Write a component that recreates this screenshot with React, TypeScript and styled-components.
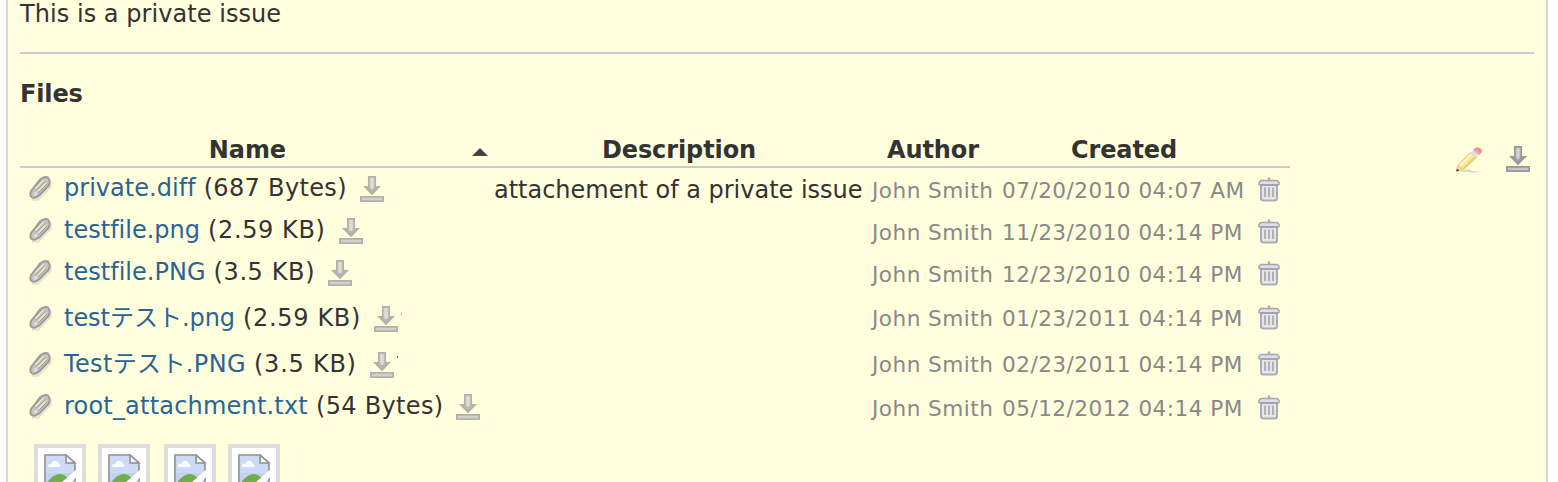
import React from "react";
import styled, { createGlobalStyle } from "styled-components";

const Global = createGlobalStyle`
  * { box-sizing: border-box; }
  html, body { margin: 0; height: 482px; overflow: hidden; background: #fff; }
  body {
    color: #333;
    font: 24px/28px "DejaVu Sans", "Noto Sans CJK JP", sans-serif;
    font-variant-ligatures: none;
  }
`;

const Issue = styled.main`
  height: 482px;
  margin: 0 10px 0 6px;
  padding: 0 12px;
  border: solid #d7d7d7;
  border-width: 0 2px;
  background: #ffffdd;
  overflow: hidden;
`;
const Description = styled.p`
  height: 52px;
  margin: 0;
  letter-spacing: 0.05px;
`;
const Rule = styled.hr`
  height: 2px;
  margin: 0;
  border: 0;
  background: #c9c8cc;
`;
const Heading = styled.h3`
  height: 81px;
  margin: 0;
  padding-top: 26px;
  font-size: 24px;
  line-height: 28px;
  letter-spacing: -0.15px;
`;
const Attachments = styled.section`
  display: flex;
  justify-content: space-between;
  align-items: flex-start;
`;
const Table = styled.div`
  width: 1270px;
`;
const columns = "474px 378px 130px 254px 1fr";
const HeaderRow = styled.div`
  display: grid;
  grid-template-columns: ${columns};
  height: 33px;
  padding-top: 1px;
  border-bottom: 2px solid #c9c8cc;
  font-weight: bold;
  line-height: 28px;
  letter-spacing: -0.1px;
`;
const HeaderCell = styled.div<{ $sorted?: boolean; $pad?: number }>`
  display: flex;
  justify-content: ${(p) => (p.$sorted ? "flex-end" : "center")};
  align-items: center;
  height: 28px;
  padding-right: ${(p) => p.$pad ?? 0}px;
  gap: 186px;
  white-space: nowrap;
`;
const Row = styled.div<{ $tall?: boolean }>`
  display: grid;
  grid-template-columns: ${columns};
  align-items: center;
  height: ${(p) => (p.$tall ? 46 : 42)}px;
  white-space: nowrap;
`;
const NameCell = styled.div<{ $tall?: boolean }>`
  display: flex;
  align-items: center;
  height: 32px;
  margin-top: ${(p) => (p.$tall ? 2 : -2)}px;
  padding-left: 4px;
`;
const FileName = styled.a<{ $spacing?: number }>`
  margin-left: 8px;
  color: #2a6496;
  letter-spacing: ${(p) => p.$spacing ?? 0}px;
`;
const FileSize = styled.span<{ $spacing: number }>`
  margin: 0 9px 0 8px;
  letter-spacing: ${(p) => p.$spacing}px;
`;
const Note = styled.div`
  padding-top: 2px;
  line-height: 28px;
  letter-spacing: -0.02px;
`;
const Meta = styled.div`
  padding-top: 3px;
  color: #888;
  font-size: 21.6px;
  line-height: 28px;
  letter-spacing: 0.46px;
`;
const Icon = styled.svg<{ $faded?: boolean; $lift?: number }>`
  display: block;
  flex: none;
  width: 32px;
  height: 32px;
  margin-top: ${(p) => -(p.$lift ?? 0)}px;
  opacity: ${(p) => (p.$faded ? 0.75 : 1)};
`;
const DownloadLink = styled.a`
  padding-top: 2px;
`;
const Tick = styled.i<{ $strong?: boolean }>`
  width: 1px;
  height: 2px;
  margin: ${(p) => (p.$strong ? "-15px 0 0 -1px" : "-9px 0 0 -1px")};
  background: ${(p) => (p.$strong ? "#2a6496" : "#9db3a8")};
`;
const Toolbar = styled.div`
  display: flex;
  gap: 18px;
  padding-top: 8px;
`;
const Thumbnails = styled.div`
  display: flex;
  gap: 12px;
  padding: 16px 0 0 14px;
`;
const Thumbnail = styled.div<{ $offset?: boolean }>`
  width: 52px;
  height: 60px;
  margin-left: ${(p) => (p.$offset ? 2 : 0)}px;
  padding: 6px;
  border: 4px solid #ddd;
  background: #fff;
`;
const Picture = styled.svg`
  display: block;
`;
const SortMark = styled.svg`
  display: block;
  margin-top: 3px;
`;

const Clip = () => (
  <Icon viewBox="0 0 32 32" $lift={3} fill="none" strokeLinecap="round" strokeLinejoin="round">
    <path d="M9 28.5H14L26.5 16V10" stroke="#aaa" strokeWidth="2.4" opacity=".3" />
    <path d="M7 20L16 8.5Q20 5 24 6.5Q27 10 24.5 15L15 24.5Q11 28 7.5 26Q5.5 24 7 20Z" fill="#c4c4bd" stroke="#9b9b9b" strokeWidth="1.9" />
    <path d="M12 17L19 9.5M14.5 20L21.5 12.5" stroke="#eaeac6" strokeWidth="1.6" />
    <path d="M10.5 16.5L17.5 9M12.5 19L20.5 11M14.5 21.5L22.5 13.5" stroke="#999" strokeWidth="1" />
    <path d="M9 23L12 20.5L14 22L11 25Z" fill="#dedede" />
  </Icon>
);

const Download = ({ faded }: { faded?: boolean }) => (
  <Icon viewBox="0 0 32 32" $faded={faded}>
    <path d="M12.8 3.8H19.2V13.8H23L16 21L9 13.8H12.8Z" fill="#c6c6c8" stroke="#98989a" strokeWidth="1.7" />
    <path d="M10 14.5H22L16 20.5Z" fill="#888" opacity=".6" />
    <path d="M16 5V16" stroke="#d3d3d5" strokeWidth="2.4" />
    <path d="M4.9 23.9H27.1V28.1H4.9Z" fill="#c4c4c6" stroke="#98989a" strokeWidth="1.8" />
  </Icon>
);

const Trash = () => (
  <Icon viewBox="3 0 32 32">
    <path d="M8 12V25Q8 27.5 10.5 27.5H21.5Q24 27.5 24 25V12" fill="#e7e6e6" stroke="#acabb6" strokeWidth="2" />
    <path d="M12 14.5V24M16 14.5V24M20 14.5V24" stroke="#aeadb8" strokeWidth="1.9" />
    <path d="M14.8 4.5H17.2V7.5H14.8Z" fill="#a9a8b4" />
    <path d="M8 7.5H24L26 9.5Q26.8 12 24.5 12H7.5Q5.2 12 6 9.5Z" fill="#dfdee6" stroke="#a6a5b2" strokeWidth="1.5" />
    <path d="M7 12H25" stroke="#a19fae" strokeWidth="1.6" />
  </Icon>
);

const Pencil = () => (
  <Icon viewBox="0 0 32 32" opacity="0.85">
    <path d="M8 29Q15 25 18 27T31 28Q22 31 16 29Z" fill="#aaa98e" opacity=".4" />
    <path d="M4 28L6 22L19 9L25 14L11 27Z" fill="#f6e98e" stroke="#dfca78" strokeWidth="1" />
    <path d="M8 23L21 10" stroke="#fff6b8" strokeWidth="2.4" />
    <path d="M11 26L24 13" stroke="#e6c967" strokeWidth="1.4" />
    <path d="M4 28L6.3 22.5Q10 23 10.8 27Z" fill="#f3d5a4" />
    <path d="M4 28.5L5 25.7L7.6 27.5Z" fill="#444" />
    <path d="M18 10L21 7L27 12L24 15Z" fill="#dedfe0" />
    <path d="M21 7L23 5Q26 3 29 6Q31 8 29 10L27 12Z" fill="#ed9290" />
    <path d="M23 7L27 10" stroke="#f8b4ae" strokeWidth="1.5" />
  </Icon>
);

const BrokenImage = () => (
  <Picture width="32" height="40" viewBox="0 0 32 40">
    <path d="M1 1H23L31 9V40H1Z" fill="#c2d2f0" />
    <path d="M2 2H22V10H30V19H2Z" fill="#cddaf5" />
    <path d="M4 12Q4 9.5 7.5 9.5Q9 5.5 13 7.5Q15 8 15 10Q17.5 11 16 13H4Z" fill="#fff" />
    <path d="M3 29Q9 20 16 20Q24 21 27 29V40H3Z" fill="#70ad4b" />
    <path d="M1 40V1H22L31 9V17" fill="none" stroke="#929292" strokeWidth="1.6" />
    <path d="M31 22V40" stroke="#929292" strokeWidth="1.6" />
    <path d="M32.5 15.5L18 28V40L32.5 22.5Z" fill="#fff" />
    <path d="M22 1V9H31Z" fill="#f3f3f3" stroke="#929292" strokeWidth="1.6" />
  </Picture>
);

type Attachment = {
  name: string;
  size: string;
  date: string;
  note?: string;
  tall?: boolean;
  tick?: "soft" | "strong";
  nameSpacing?: number;
  sizeSpacing: number;
};

const files: Attachment[] = [
  { name: "private.diff", size: "687 Bytes", note: "attachement of a private issue", date: "07/20/2010 04:07 AM", nameSpacing: 0.03, sizeSpacing: 0.33 },
  { name: "testfile.png", size: "2.59 KB", date: "11/23/2010 04:14 PM", nameSpacing: 0.01, sizeSpacing: 0.6 },
  { name: "testfile.PNG", size: "3.5 KB", date: "12/23/2010 04:14 PM", nameSpacing: 0.02, sizeSpacing: 0.6 },
  { name: "testテスト.png", size: "2.59 KB", date: "01/23/2011 04:14 PM", tall: true, tick: "soft", nameSpacing: -0.03, sizeSpacing: 0.66 },
  { name: "Testテスト.PNG", size: "3.5 KB", date: "02/23/2011 04:14 PM", tall: true, tick: "strong", nameSpacing: 0.37, sizeSpacing: 0.75 },
  { name: "root_attachment.txt", size: "54 Bytes", date: "05/12/2012 04:14 PM", nameSpacing: 0.2, sizeSpacing: 0.32 },
];

export default function App() {
  return (
    <>
      <Global />
      <Issue>
        <Description>This is a private issue</Description>
        <Rule />
        <Heading>Files</Heading>
        <Attachments>
          <Table>
            <HeaderRow>
              <HeaderCell $sorted $pad={6}>
                Name
                <SortMark width="16" height="8"><path d="M0 8L8 0L16 8Z" fill="#444" /></SortMark>
              </HeaderCell>
              <HeaderCell $pad={8}>Description</HeaderCell>
              <HeaderCell $pad={8}>Author</HeaderCell>
              <HeaderCell $pad={10}>Created</HeaderCell>
            </HeaderRow>
            {files.map((file) => (
              <Row key={file.name} $tall={file.tall}>
                <NameCell $tall={file.tall}>
                  <Clip />
                  <FileName $spacing={file.nameSpacing}>{file.name}</FileName>
                  <FileSize $spacing={file.sizeSpacing}>({file.size})</FileSize>
                  <DownloadLink><Download faded /></DownloadLink>
                  {file.tick && <Tick $strong={file.tick === "strong"} />}
                </NameCell>
                <Note>{file.note}</Note>
                <Meta>John Smith</Meta>
                <Meta>{file.date}</Meta>
                <Trash />
              </Row>
            ))}
          </Table>
          <Toolbar>
            <Pencil />
            <Download />
          </Toolbar>
        </Attachments>
        <Thumbnails>
          <Thumbnail><BrokenImage /></Thumbnail>
          <Thumbnail><BrokenImage /></Thumbnail>
          <Thumbnail $offset><BrokenImage /></Thumbnail>
          <Thumbnail><BrokenImage /></Thumbnail>
        </Thumbnails>
      </Issue>
    </>
  );
}
